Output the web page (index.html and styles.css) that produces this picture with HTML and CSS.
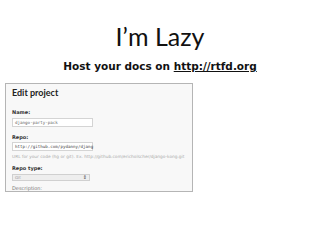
FILE: index.html
```html
<!DOCTYPE html>
<html lang="en">
<head>
    <meta charset="UTF-8">
    <title>I'm Lazy</title>
    <link rel="stylesheet" href="styles.css">
</head>
<body>
    <!-- Slide heading -->
    <h1 class="title">I’m Lazy</h1>
    <p class="subtitle">Host your docs on <a href="http://rtfd.org">http://rtfd.org</a></p>

    <!-- Screenshot of the edit form -->
    <div class="panel">
        <h2 class="panel-title">Edit project</h2>
        <label class="field-label">Name:</label>
        <div class="field-input name-input">django-party-pack</div>
        <label class="field-label">Repo:</label>
        <div class="field-input repo-input">http://github.com/pydanny/djang</div>
        <p class="help">URL for your code (hg or git). Ex. http://github.com/ericholscher/django-kong.git</p>
        <label class="field-label">Repo type:</label>
        <div class="field-select">Git<span class="arrows">⇕</span></div>
        <label class="field-label light">Description:</label>
    </div>
</body>
</html>
```

FILE: styles.css
```css
/* Slide */
body {
    margin: 0;
    background-color: #fff;
    font-family: Lato, "Open Sans", sans-serif;
    color: #111;
}

.title {
    margin: 22px 0 0 0;
    text-align: center;
    font-size: 25px;
    font-weight: normal;
    line-height: 28px;
}

.subtitle {
    margin: 9px 0 0 0;
    text-align: center;
    font-family: "DejaVu Sans", sans-serif;
    font-size: 10.5px;
    font-weight: bold;
    line-height: 14px;
}

.subtitle a {
    color: #111;
    text-decoration: underline;
}

/* Screenshot panel */
.panel {
    margin: 10px 0 0 5px;
    width: 188px;
    height: 109px;
    box-sizing: border-box;
    border: 1px solid #b5b5b5;
    background-color: #f8f8f8;
    padding: 2px 6px 0 6px;
    overflow: hidden;
    font-family: "DejaVu Sans", sans-serif;
}

.panel-title {
    margin: 0 0 9px 0;
    font-family: Lato, sans-serif;
    font-size: 9px;
    line-height: 14px;
    font-weight: bold;
    color: #222;
}

.field-label {
    display: block;
    font-size: 5px;
    line-height: 6px;
    font-weight: bold;
    color: #333;
}

.field-label.light {
    font-weight: normal;
    color: #777;
    margin-top: 4px;
}

.field-input {
    margin-top: 3px;
    width: 81px;
    height: 9px;
    box-sizing: border-box;
    border: 1px solid #d4d4d4;
    background-color: #fff;
    padding: 0 2px;
    font-family: "DejaVu Sans Mono", monospace;
    font-size: 4.2px;
    line-height: 7px;
    color: #666;
    white-space: nowrap;
}

.name-input {
    margin-bottom: 7px;
}

.repo-input {
    margin-top: 2px;
    color: #444;
}

.help {
    margin: 3px 0 5px 0;
    font-size: 4.3px;
    line-height: 6px;
    color: #aaa;
    white-space: nowrap;
}

.field-select {
    display: flex;
    justify-content: space-between;
    margin-top: 3px;
    width: 78px;
    height: 7px;
    box-sizing: border-box;
    border: 1px solid #d0d0d0;
    background-color: #eee;
    padding: 0 2px;
    font-size: 4px;
    line-height: 5px;
    color: #999;
}

.arrows {
    color: #444;
    font-size: 5px;
}
```
